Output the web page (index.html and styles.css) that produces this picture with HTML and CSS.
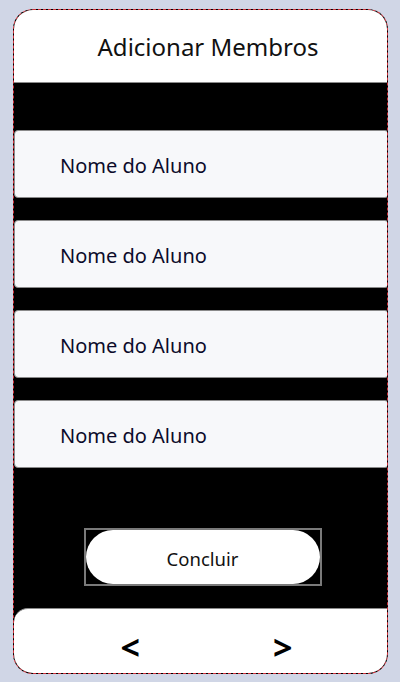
FILE: index.html
```html
<!DOCTYPE html>
<html lang="pt">
<head>
<meta charset="utf-8">
<link rel="stylesheet" href="styles.css">
</head>
<body>
<div class="card">
  <header class="header">Adicionar Membros</header>
  <div class="fields">
    <div class="field">Nome do Aluno</div>
    <div class="field">Nome do Aluno</div>
    <div class="field">Nome do Aluno</div>
    <div class="field">Nome do Aluno</div>
  </div>
  <div class="action">
    <div class="action-frame"><button class="btn">Concluir</button></div>
  </div>
  <footer class="footer">
    <span class="arrow">&lt;</span>
    <span class="arrow">&gt;</span>
  </footer>
</div>
</body>
</html>
```

FILE: styles.css
```css
html, body {
  margin: 0;
  padding: 0;
}
body {
  background: #d0d6e6;
  padding: 9px 12px 8px 13px;
  font-family: "Noto Sans", "Open Sans", sans-serif;
  color: #0b0b2a;
}
.card {
  box-sizing: border-box;
  width: 375px;
  height: 665px;
  background: #000;
  border: 1px dashed #d0313a;
  border-radius: 20px;
  overflow: hidden;
  display: flex;
  flex-direction: column;
}
.header {
  background: #fff;
  height: 73px;
  border-bottom: 1px solid #8a8a8a;
  display: flex;
  align-items: center;
  justify-content: center;
  padding-left: 15px;
  font-size: 24px;
  color: #111;
  box-sizing: border-box;
}
.fields {
  margin-top: 47px;
  display: flex;
  flex-direction: column;
  gap: 22px;
}
.field {
  box-sizing: border-box;
  height: 68px;
  margin-right: -2px;
  background: #f7f8fa;
  border: 1px solid #8a8a8a;
  border-radius: 4px;
  display: flex;
  align-items: center;
  padding-left: 45px;
  padding-top: 2px;
  font-size: 20px;
  color: #0b0b2a;
}
.action {
  margin-top: 60px;
  display: flex;
  justify-content: center;
  padding-left: 4px;
}
.action-frame {
  border: 2px solid #7a7a7a;
  width: 234px;
  height: 54px;
  display: flex;
}
.btn {
  flex: 1;
  border: none;
  background: #fff;
  border-radius: 27px;
  font-family: inherit;
  font-size: 18.5px;
  color: #111;
  padding: 3px 0 0;
}
.footer {
  margin-top: auto;
  height: 65px;
  box-sizing: border-box;
  background: #fff;
  border-top: 1px solid #8a8a8a;
  border-top-left-radius: 14px;
  display: flex;
  justify-content: center;
  align-items: center;
  gap: 133px;
  padding-top: 12px;
  padding-left: 12px;
}
.arrow {
  font-size: 34px;
  font-weight: 700;
  color: #000;
  line-height: 1;
}
```
